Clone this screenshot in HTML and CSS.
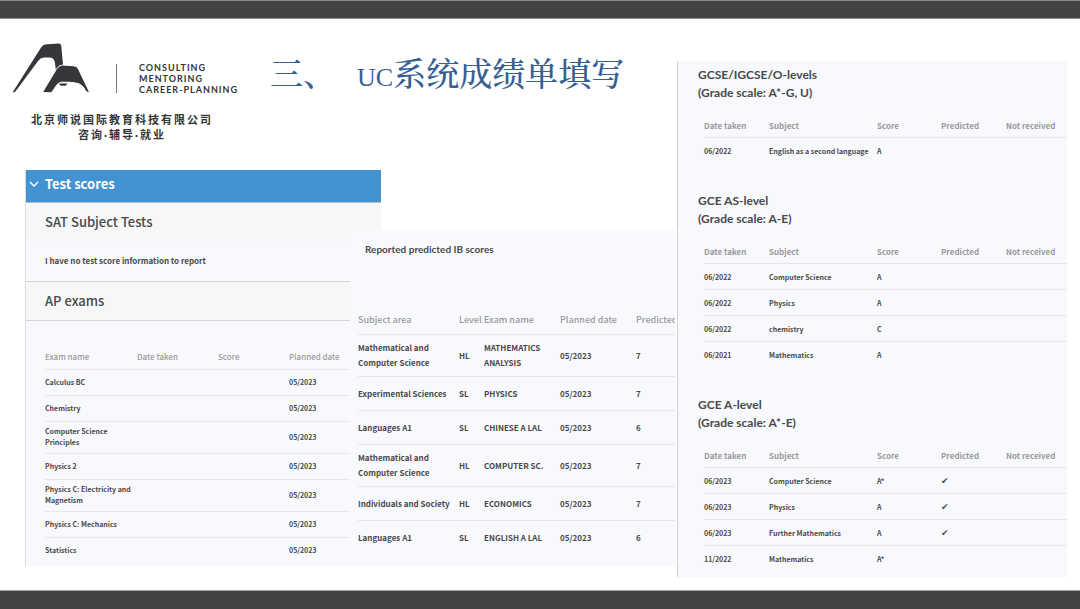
FILE: index.html
```html
<!DOCTYPE html>
<html lang="zh-CN">
<head>
<meta charset="utf-8">
<title>UC系统成绩单填写</title>
<link rel="stylesheet" href="styles.css">
</head>
<body>
<div class="bar bar-top"></div>
<main class="slide">
  <div class="left">
    <header class="head">
      <div class="brand">
        <div class="brand-row">
          <svg class="logo" viewBox="34 126 236 154" role="img" aria-label="Logo">
            <path d="M36 276L122 141Q129 131 140 131L175 129Q182 129 183 136L189 200L167 211Q165 192 163 183Q160 172 148 171L131 171Q121 171 114 180L45 273Q42 277 36 276Z"/>
            <path class="front" d="M126 277L168 207Q175 194 187 194L219 196Q230 196 235 206L269 277Q262 279 256 271Q250 257 237 251Q222 246 204 246L184 246Q174 247 169 255L157 273Q154 278 148 278Z"/>
            <path d="M177 250H201Q200 257 194 257H183Q178 257 177 250Z"/>
          </svg>
          <span class="rule"></span>
          <p class="motto">CONSULTING<br>MENTORING<br>CAREER-PLANNING</p>
        </div>
        <p class="company">北京师说国际教育科技有限公司<br>咨询·辅导·就业</p>
      </div>
      <h1 class="title"><span>三、</span><span><span class="latin">UC</span>系统成绩单填写</span></h1>
    </header>
    <div class="panels">
      <section class="panel tests">
        <button class="toggle" type="button"><svg class="chev" viewBox="0 0 10 6"><path d="M1 1l4 4 4-4"/></svg>Test scores</button>
        <h2 class="band">SAT Subject Tests</h2>
        <p class="note">I have no test score information to report</p>
        <h2 class="band ruled">AP exams</h2>
        <table class="grid ap">
          <thead><tr><th class="c-exam">Exam name</th><th class="c-taken">Date taken</th><th class="c-score">Score</th><th>Planned date</th></tr></thead>
          <tbody>
            <tr><td>Calculus BC</td><td></td><td></td><td>05/2023</td></tr>
            <tr><td>Chemistry</td><td></td><td></td><td>05/2023</td></tr>
            <tr><td>Computer Science<br>Principles</td><td></td><td></td><td>05/2023</td></tr>
            <tr><td>Physics 2</td><td></td><td></td><td>05/2023</td></tr>
            <tr><td>Physics C: Electricity and<br>Magnetism</td><td></td><td></td><td>05/2023</td></tr>
            <tr><td>Physics C: Mechanics</td><td></td><td></td><td>05/2023</td></tr>
            <tr><td>Statistics</td><td></td><td></td><td>05/2023</td></tr>
          </tbody>
        </table>
      </section>
      <section class="panel ib">
        <h2 class="ib-title">Reported predicted IB scores</h2>
        <table class="grid ib-table">
          <thead><tr><th class="c-area">Subject area</th><th class="c-level">Level</th><th class="c-name">Exam name</th><th class="c-plan">Planned date</th><th>Predicted</th></tr></thead>
          <tbody>
            <tr><td>Mathematical and<br>Computer Science</td><td>HL</td><td>MATHEMATICS<br>ANALYSIS</td><td>05/2023</td><td>7</td></tr>
            <tr><td>Experimental Sciences</td><td>SL</td><td>PHYSICS</td><td>05/2023</td><td>7</td></tr>
            <tr><td>Languages A1</td><td>SL</td><td>CHINESE A LAL</td><td>05/2023</td><td>6</td></tr>
            <tr><td>Mathematical and<br>Computer Science</td><td>HL</td><td>COMPUTER SC.</td><td>05/2023</td><td>7</td></tr>
            <tr><td>Individuals and Society</td><td>HL</td><td>ECONOMICS</td><td>05/2023</td><td>7</td></tr>
            <tr><td>Languages A1</td><td>SL</td><td>ENGLISH A LAL</td><td>05/2023</td><td>6</td></tr>
          </tbody>
        </table>
      </section>
    </div>
  </div>
  <div class="panel levels">
    <section>
      <h2 class="level-title">GCSE/IGCSE/O-levels<br>(Grade scale: A*-G, U)</h2>
      <table class="grid level-table">
        <thead><tr><th class="c-date">Date taken</th><th class="c-subject">Subject</th><th class="c-grade">Score</th><th class="c-pred">Predicted</th><th>Not received</th></tr></thead>
        <tbody>
          <tr><td>06/2022</td><td>English as a second language</td><td>A</td><td></td><td></td></tr>
        </tbody>
      </table>
    </section>
    <section>
      <h2 class="level-title">GCE AS-level<br>(Grade scale: A-E)</h2>
      <table class="grid level-table">
        <thead><tr><th class="c-date">Date taken</th><th class="c-subject">Subject</th><th class="c-grade">Score</th><th class="c-pred">Predicted</th><th>Not received</th></tr></thead>
        <tbody>
          <tr><td>06/2022</td><td>Computer Science</td><td>A</td><td></td><td></td></tr>
          <tr><td>06/2022</td><td>Physics</td><td>A</td><td></td><td></td></tr>
          <tr><td>06/2022</td><td>chemistry</td><td>C</td><td></td><td></td></tr>
          <tr><td>06/2021</td><td>Mathematics</td><td>A</td><td></td><td></td></tr>
        </tbody>
      </table>
    </section>
    <section>
      <h2 class="level-title">GCE A-level<br>(Grade scale: A*-E)</h2>
      <table class="grid level-table">
        <thead><tr><th class="c-date">Date taken</th><th class="c-subject">Subject</th><th class="c-grade">Score</th><th class="c-pred">Predicted</th><th>Not received</th></tr></thead>
        <tbody>
          <tr><td>06/2023</td><td>Computer Science</td><td>A*</td><td class="tick">✔</td><td></td></tr>
          <tr><td>06/2023</td><td>Physics</td><td>A</td><td class="tick">✔</td><td></td></tr>
          <tr><td>06/2023</td><td>Further Mathematics</td><td>A</td><td class="tick">✔</td><td></td></tr>
          <tr><td>11/2022</td><td>Mathematics</td><td>A*</td><td></td><td></td></tr>
        </tbody>
      </table>
    </section>
  </div>
</main>
<div class="bar bar-bottom"></div>
</body>
</html>
```
FILE: styles.css
```css
* { box-sizing: border-box; }
body {
  margin: 0;
  min-height: 100vh;
  display: flex;
  flex-direction: column;
  background: #fff;
  color: #48494b;
  font-family: "Noto Sans CJK SC", Lato, sans-serif;
}
h1, h2, p { margin: 0; }

.bar { height: 19px; background: #434343; }
.bar-top { border-top: 1px solid #8b8b8b; border-bottom: 1px solid #8b8b8b; }
.bar-bottom { border-top: 1px solid #a0a0a0; }

.slide {
  flex: 1;
  display: grid;
  grid-template-columns: 665fr 390fr;
  padding: 0 13px 0 12px;
  align-items: start;
}

/* brand and title */
.head { display: flex; height: 151px; padding-top: 23px; }
.brand { width: 258px; color: #333538; }
.brand-row { display: flex; }
.logo { width: 78px; height: 52px; fill: #35373a; }
.front { stroke: #fff; stroke-width: 3; }
.rule { width: 1px; height: 29px; margin: 22px 22px 0 26px; background: #77797b; }
.motto {
  margin-top: 20px;
  font: 700 9px/11px Lato, sans-serif;
  letter-spacing: 1px;
}
.company {
  width: 220px;
  margin-top: 17px;
  font: 700 11px/15px Lato, "Noto Sans CJK SC", sans-serif;
  letter-spacing: 2px;
  text-align: center;
}
.title {
  display: flex;
  gap: 21px;
  margin-top: 6px;
  color: #376092;
  font: 500 33px/48px "Noto Serif CJK SC", "Noto Sans CJK SC", serif;
  white-space: nowrap;
}
.latin { font-family: "Liberation Serif", serif; font-size: 26px; }

/* the predicted scores sheet lies over the right edge of the test sheet */
.panels {
  display: grid;
  grid-template-columns: 325fr 31fr 294fr;
  margin: 0 2px 0 13px;
}
.panel { background: #f8f9fc; }
.tests { grid-area: 1 / 1 / 2 / 3; border-left: 1px solid #dcdde0; }
.ib { grid-area: 1 / 2 / 2 / 4; margin-top: 60px; padding-left: 8px; overflow: hidden; }

.toggle {
  display: flex;
  align-items: center;
  gap: 6px;
  width: 100%;
  height: 33px;
  padding: 0 0 4px 3px;
  border: 0;
  border-bottom: 1px solid #b4bcc4;
  background: #4393d3;
  color: #fff;
  font: 700 13px/20px "Noto Sans CJK SC", sans-serif;
}
.chev { width: 10px; height: 6px; fill: none; stroke: #fff; stroke-width: 1.4; }
.band {
  padding-left: 19px;
  background: #f7f7f7;
  font-size: 13px;
  font-weight: 500;
  line-height: 38px;
}
.note {
  padding-left: 19px;
  font-size: 8px;
  font-weight: 700;
  line-height: 40px;
}
.ruled { border-top: 1px solid #d3d4d6; border-bottom: 1px solid #d3d4d6; }

/* tables */
.grid { table-layout: fixed; border-collapse: separate; border-spacing: 0; text-align: left; }
.grid th, .grid td { padding: 0; white-space: nowrap; border-bottom: 1px solid #e6e7e9; }
.grid th { color: #98999b; font-weight: 500; }
.grid td { font-weight: 700; }
.grid tbody tr:last-child td { border-bottom: 0; }

.ap { width: calc(100% - 19px); margin: 23px 0 2px 19px; font-size: 7px; line-height: 11px; }
.ap th { height: 26px; font-size: 8px; }
.ap td { height: 26px; padding: 4px 0 5px; }
.c-exam { width: 92px; }
.c-taken { width: 81px; }
.c-score { width: 71px; }

.ib-title { padding: 10px 0 0 7px; font: 700 10px/18px Lato, sans-serif; }
.ib-table { width: 100%; margin-top: 46px; font-size: 8px; line-height: 15px; }
.ib-table th { height: 31px; font-size: 9px; }
.ib-table td { height: 34px; padding: 5px 0 6px; }
.c-area { width: 101px; }
.c-level { width: 25px; }
.c-name { width: 76px; }
.c-plan { width: 76px; }

.levels {
  display: flex;
  flex-direction: column;
  gap: 28px;
  margin-top: 42px;
  padding: 5px 0 5px 20px;
  border-left: 1px solid #d0d2d5;
}
.level-title { font: 700 12px/18px Lato, sans-serif; }
.level-table { width: calc(100% - 6px); margin: 12px 0 0 6px; font-size: 7px; line-height: 12px; }
.level-table th { height: 24px; font-size: 8px; font-weight: 700; }
.level-table td { height: 26px; }
.level-table .tick { font-family: "DejaVu Sans", sans-serif; font-size: 9px; }
.c-date { width: 65px; }
.c-subject { width: 108px; }
.c-grade { width: 64px; }
.c-pred { width: 65px; }
```
